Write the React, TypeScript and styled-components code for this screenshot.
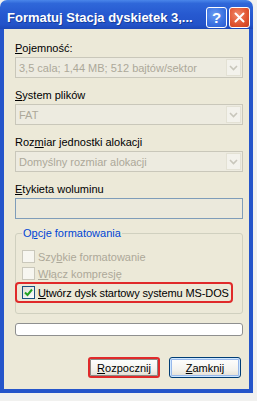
import React from 'react';
import styled, { createGlobalStyle } from 'styled-components';

const GlobalStyle = createGlobalStyle`
  html, body {
    margin: 0;
    padding: 0;
    background: #f1f1ef;
  }
  body {
    font-family: 'Liberation Sans', Arial, sans-serif;
    font-size: 11px;
  }
`;

const Window = styled.div`
  width: 253px;
  height: 393px;
  display: flex;
  flex-direction: column;
`;

const TitleBar = styled.div`
  height: 29px;
  box-sizing: border-box;
  display: flex;
  align-items: center;
  padding: 6px 3px 0 7px;
  border-radius: 7px 7px 0 0;
  background: linear-gradient(
    #4a86ea 0%,
    #2f67d9 12%,
    #2659d0 50%,
    #2353c9 85%,
    #1c48b8 100%
  );
`;

const Title = styled.div`
  flex: 1;
  color: #fff;
  font-weight: bold;
  font-size: 13px;
  white-space: nowrap;
  text-shadow: 1px 1px 0 #153d9a;
`;

const CaptionButton = styled.div<{ $close?: boolean }>`
  width: 21px;
  height: 21px;
  box-sizing: border-box;
  margin-left: 2px;
  border: 1px solid #fff;
  border-radius: 3px;
  display: flex;
  align-items: center;
  justify-content: center;
  color: #fff;
  font-weight: bold;
  font-size: 15px;
  background: ${({ $close }) =>
    $close
      ? 'radial-gradient(circle at 40% 35%, #f08a6a 0%, #e0532f 60%, #c84020 100%)'
      : 'radial-gradient(circle at 40% 35%, #6a9cf2 0%, #3a70e0 60%, #2b5cd0 100%)'};
`;

const Client = styled.div`
  flex: 1;
  display: flex;
  flex-direction: column;
  background: #ece9d8;
  border: 4px solid #2555ca;
  border-top: none;
  padding: 12px 6px 0 11px;
`;

const Field = styled.div<{ $gap?: number }>`
  display: flex;
  flex-direction: column;
  margin-bottom: ${({ $gap }) => $gap ?? 10}px;
`;

const Label = styled.div`
  height: 14px;
  line-height: 14px;
  margin-bottom: 2px;
  color: #000;
`;

const Key = styled.span`
  text-decoration: underline;
`;

const Combo = styled.div`
  height: 21px;
  box-sizing: border-box;
  display: flex;
  align-items: center;
  border: 1px solid #c9c7ba;
  background: #edebe0;
  color: #aca899;
  padding-left: 3px;
`;

const ComboText = styled.span`
  flex: 1;
  white-space: nowrap;
`;

const ComboArrow = styled.div`
  width: 15px;
  height: 17px;
  margin-right: 1px;
  box-sizing: border-box;
  border: 1px solid #e3e1d4;
  background: #f3f2ec;
  display: flex;
  align-items: center;
  justify-content: center;
`;

const TextBox = styled.div`
  height: 21px;
  box-sizing: border-box;
  border: 1px solid #7f9db9;
  background: #ebe9dc;
`;

const Group = styled.fieldset`
  margin: 0;
  min-width: 0;
  border: 1px solid #d0d0bf;
  border-radius: 3px;
  padding: 8px 6px 10px 6px;
  display: flex;
  flex-direction: column;
`;

const Legend = styled.legend`
  padding: 0 1px;
  height: 14px;
  line-height: 14px;
  color: #0046d5;
`;

const CheckRow = styled.div<{ $marked?: boolean; $disabled?: boolean }>`
  height: ${({ $marked }) => ($marked ? 21 : 17)}px;
  box-sizing: border-box;
  display: flex;
  align-items: center;
  gap: 3px;
  white-space: nowrap;
  color: ${({ $disabled }) => ($disabled ? '#aca899' : '#000')};
  ${({ $marked }) =>
    $marked &&
    `
    border: 2px solid #e02a2a;
    border-radius: 4px;
    margin: 0 3px 0 -7px;
    padding: 0 0 0 5px;
    letter-spacing: -0.12px;
  `}
`;

const CheckBox = styled.div<{ $checked?: boolean }>`
  flex: none;
  width: 13px;
  height: 13px;
  box-sizing: border-box;
  border: 1px solid ${({ $checked }) => ($checked ? '#1c5180' : '#cac8bb')};
  background: ${({ $checked }) =>
    $checked ? 'linear-gradient(135deg, #dcdcd6, #ffffff)' : '#f7f6f0'};
  display: flex;
  align-items: center;
  justify-content: center;
`;

const Progress = styled.div`
  margin-top: 9px;
  height: 13px;
  box-sizing: border-box;
  border: 1px solid #8e8f8f;
  border-radius: 3px;
  background: #fff;
`;

const Buttons = styled.div`
  margin-top: 21px;
  padding-right: 2px;
  display: flex;
  justify-content: flex-end;
  gap: 9px;
`;

const Button = styled.div<{ $marked?: boolean }>`
  width: 72px;
  height: 21px;
  box-sizing: border-box;
  border-radius: 3px;
  display: flex;
  align-items: center;
  justify-content: center;
  color: #000;
  background: linear-gradient(#ffffff 0%, #f4f3ee 60%, #e6e3d9 90%, #d6d0c5 100%);
  border: ${({ $marked }) => ($marked ? '2px solid #e02a2a' : '1px solid #003c74')};
  box-shadow: ${({ $marked }) =>
    $marked
      ? 'inset 0 0 0 1px #8a8a86'
      : 'inset 0 0 0 1px #cee7ff, inset 0 0 0 2px #98b8ea'};
`;

const Chevron = () => (
  <svg width="9" height="6" viewBox="0 0 9 6">
    <polyline points="1,1 4.5,4.5 8,1" fill="none" stroke="#c8c6bb" strokeWidth="1.6" />
  </svg>
);

const Check = () => (
  <svg width="9" height="9" viewBox="0 0 9 9">
    <polyline points="1,4.5 3.5,7 8,1.5" fill="none" stroke="#21a121" strokeWidth="2" />
  </svg>
);

const CloseGlyph = () => (
  <svg width="11" height="11" viewBox="0 0 11 11">
    <path d="M1.5 1.5 L9.5 9.5 M9.5 1.5 L1.5 9.5" stroke="#fff" strokeWidth="2" strokeLinecap="round" />
  </svg>
);

const combos = [
  { label: <><Key>P</Key>ojemność:</>, value: '3,5 cala;  1,44 MB; 512 bajtów/sektor' },
  { label: <><Key>S</Key>ystem plików</>, value: 'FAT' },
  { label: <>Roz<Key>m</Key>iar jednostki alokacji</>, value: 'Domyślny rozmiar alokacji' },
];

const App: React.FC = () => (
  <>
    <GlobalStyle />
    <Window>
      <TitleBar>
        <Title>Formatuj Stacja dyskietek 3,...</Title>
        <CaptionButton>?</CaptionButton>
        <CaptionButton $close>
          <CloseGlyph />
        </CaptionButton>
      </TitleBar>
      <Client>
        {combos.map((c, i) => (
          <Field key={i}>
            <Label>{c.label}</Label>
            <Combo>
              <ComboText>{c.value}</ComboText>
              <ComboArrow>
                <Chevron />
              </ComboArrow>
            </Combo>
          </Field>
        ))}
        <Field $gap={7}>
          <Label>
            <Key>E</Key>tykieta woluminu
          </Label>
          <TextBox />
        </Field>
        <Group>
          <Legend>
            O<Key>p</Key>cje formatowania
          </Legend>
          <CheckRow $disabled>
            <CheckBox />
            <span>
              Szy<Key>b</Key>kie formatowanie
            </span>
          </CheckRow>
          <CheckRow $disabled>
            <CheckBox />
            <span>
              <Key>W</Key>łącz kompresję
            </span>
          </CheckRow>
          <CheckRow $marked>
            <CheckBox $checked>
              <Check />
            </CheckBox>
            <span>
              <Key>U</Key>twórz dysk startowy systemu MS-DOS
            </span>
          </CheckRow>
        </Group>
        <Progress />
        <Buttons>
          <Button $marked>
            <span>
              <Key>R</Key>ozpocznij
            </span>
          </Button>
          <Button>
            <span>
              <Key>Z</Key>amknij
            </span>
          </Button>
        </Buttons>
      </Client>
    </Window>
  </>
);

export default App;
